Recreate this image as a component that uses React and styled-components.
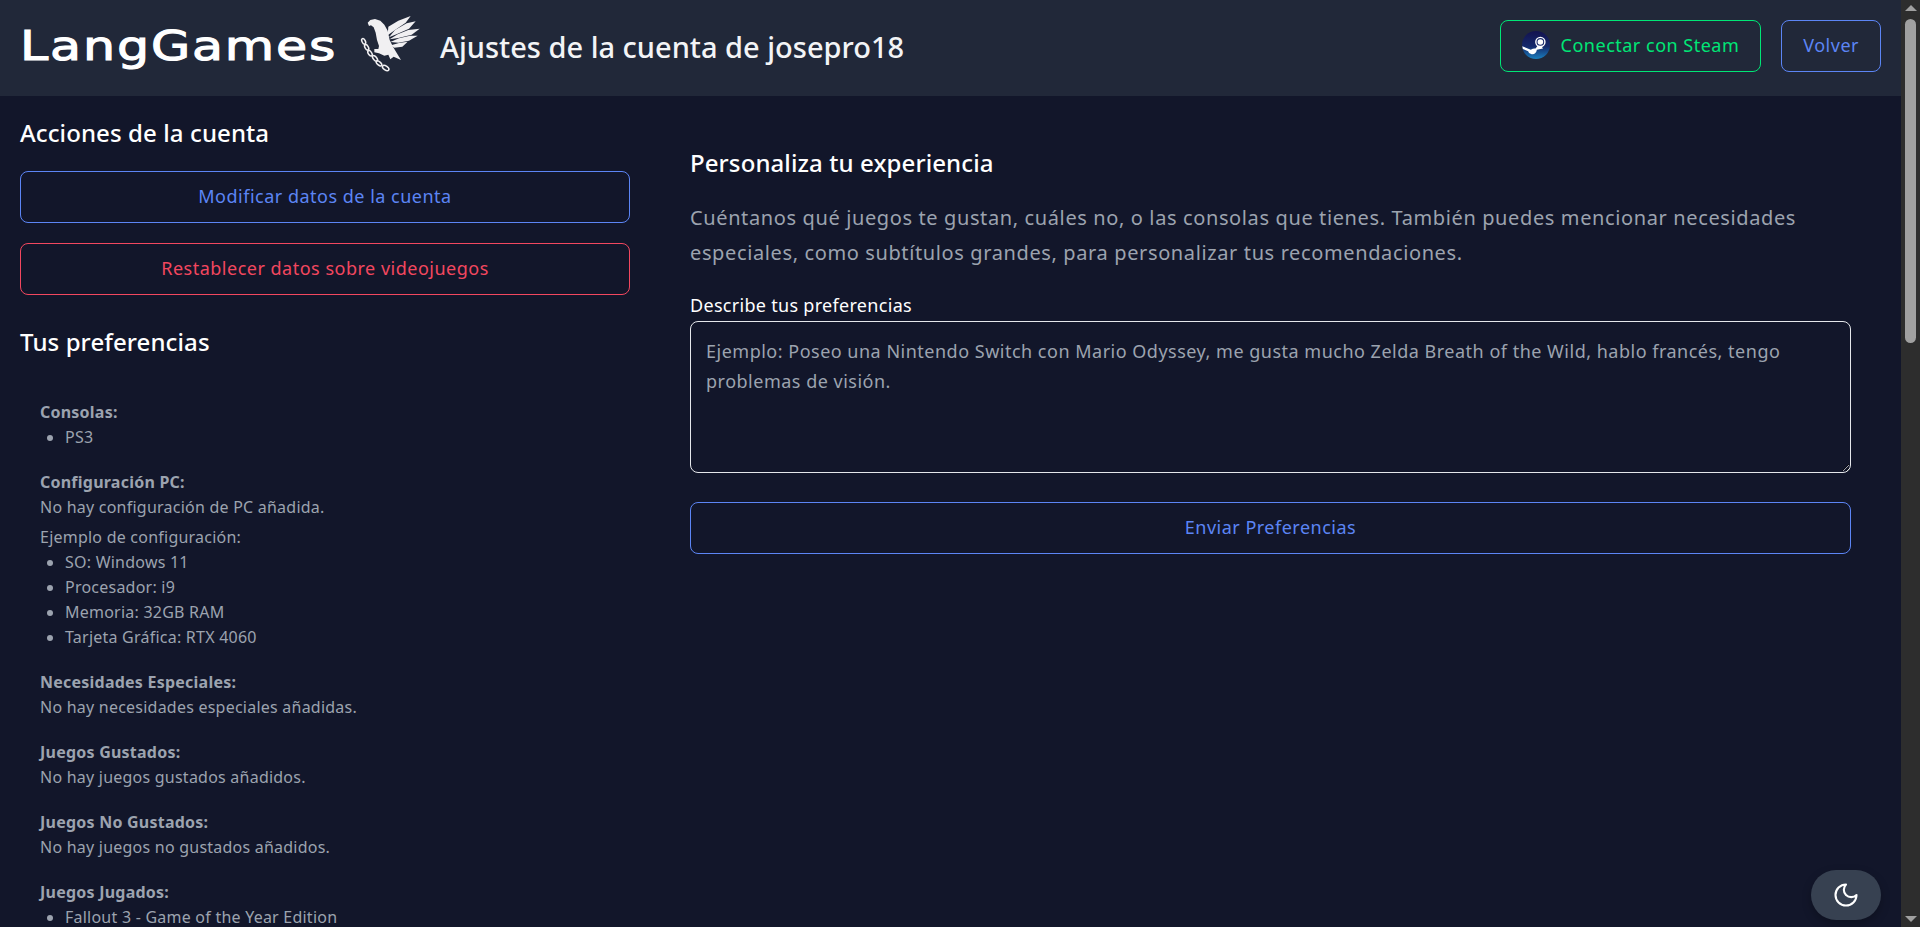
import React from 'react';
import styled, { createGlobalStyle } from 'styled-components';
import { LuMoon } from 'react-icons/lu';

const GlobalStyle = createGlobalStyle`
  html, body {
    height: 100%;
    overflow: hidden;
  }
  body {
    margin: 0;
    padding-right: 19px;
    background: #12162a;
    font-family: "Noto Sans", "Open Sans", sans-serif;
    color: #fff;
  }
  * { box-sizing: border-box; }
`;

const Header = styled.header`
  height: 96px;
  background: #212839;
  display: flex;
  align-items: center;
  padding: 0 20px 4px;
`;

const Logo = styled.span`
  display: block;
  width: 316px;
  font-family: "DejaVu Sans", sans-serif;
  font-size: 41px;
  font-weight: 400;
  letter-spacing: 1.5px;
  -webkit-text-stroke: 1.1px #fff;
  white-space: nowrap;
  transform: scaleX(1.235);
  transform-origin: left center;
`;

const Bird = styled.svg`
  width: 70px;
  height: 68px;
  margin: 0 0 4px 19px;
  flex: none;
`;

const Title = styled.h1`
  margin: 0 0 0 15px;
  font-size: 29px;
  font-weight: 500;
  color: #f3f4f6;
`;

const HeaderActions = styled.div`
  margin-left: auto;
  display: flex;
  gap: 20px;
`;

const OutlineButton = styled.button`
  height: 52px;
  display: flex;
  align-items: center;
  justify-content: center;
  gap: 11px;
  padding: 0 21px 2px;
  width: ${({ $wide }) => ($wide ? '100%' : 'auto')};
  border: 1px solid ${({ $color }) => $color};
  border-radius: 8px;
  background: transparent;
  color: ${({ $color }) => $color};
  font-family: inherit;
  font-size: 18px;
  letter-spacing: 0.5px;
`;

const Page = styled.main`
  display: grid;
  grid-template-columns: 630px 1fr;
`;

const Sidebar = styled.aside`
  padding: 20px 0 0 20px;
`;

const SideTitle = styled.h2`
  margin: 0;
  font-size: 24px;
  line-height: 34px;
  font-weight: 500;
  letter-spacing: 0.1px;
  margin-bottom: ${({ $gap }) => $gap}px;
`;

const SideActions = styled.div`
  display: flex;
  flex-direction: column;
  gap: 20px;
  margin-bottom: 30px;
`;

const PrefList = styled.div`
  padding: 41px 20px 0;
  color: #9ca3af;
  font-size: 16px;
  line-height: 25px;
  letter-spacing: 0.23px;
`;

const PrefBlock = styled.section`
  margin-bottom: 20px;
`;

const PrefName = styled.strong`
  display: block;
  font-weight: 700;
`;

const PrefNote = styled.div`
  margin-top: ${({ $gap }) => $gap || 0}px;
`;

const Bullets = styled.ul`
  margin: 0;
  padding-left: 25px;
`;

const Content = styled.section`
  padding: 50px 50px 0 60px;
`;

const ContentTitle = styled.h2`
  margin: 0 0 20px;
  font-size: 24px;
  line-height: 34px;
  font-weight: 500;
  letter-spacing: 0.1px;
`;

const Lead = styled.p`
  margin: 0 0 22px;
  font-size: 20px;
  line-height: 35px;
  letter-spacing: 0.62px;
  color: #9ca3af;
`;

const FieldLabel = styled.label`
  display: block;
  margin-bottom: 3px;
  font-size: 18px;
  line-height: 26px;
  letter-spacing: 0.3px;
`;

const TextArea = styled.textarea`
  display: block;
  width: 100%;
  height: 152px;
  margin-bottom: 29px;
  padding: 14px 15px;
  background: transparent;
  border: 1px solid #e5e7eb;
  border-radius: 8px;
  color: #fff;
  font-family: inherit;
  font-size: 18px;
  line-height: 30px;
  letter-spacing: 0.5px;
  &::placeholder {
    color: #9ca3af;
    opacity: 1;
  }
`;

const ThemeToggle = styled.button`
  position: fixed;
  right: 39px;
  bottom: 7px;
  width: 70px;
  height: 50px;
  display: flex;
  align-items: center;
  justify-content: center;
  border: 0;
  border-radius: 25px;
  background: #374151;
  color: #fff;
  box-shadow: 0 4px 10px rgba(0, 0, 0, 0.25);
`;

/* the screenshot has the browser's dark scrollbar, headless hides the real one */
const ScrollRail = styled.div`
  position: fixed;
  top: 0;
  right: 0;
  bottom: 0;
  width: 19px;
  padding: 5px 0;
  background: #2d2d2d;
  display: flex;
  flex-direction: column;
  align-items: center;
`;

const ScrollArrow = styled.span`
  flex: none;
  width: 0;
  height: 0;
  border-left: 6px solid transparent;
  border-right: 6px solid transparent;
  border-${({ $down }) => ($down ? 'top' : 'bottom')}: 6px solid #a0a0a0;
  margin-top: ${({ $down }) => ($down ? 'auto' : '0')};
`;

const ScrollThumb = styled.span`
  flex: none;
  width: 11px;
  height: 324px;
  margin-top: 8px;
  border-radius: 6px;
  background: #a0a0a0;
`;

const SteamIcon = () => (
  <svg width="28" height="28" viewBox="0 0 32 32">
    <defs>
      <linearGradient id="steamFill" x1="0" y1="0" x2="0" y2="1">
        <stop offset="0" stopColor="#13124f" />
        <stop offset="0.55" stopColor="#15296b" />
        <stop offset="1" stopColor="#1a7fbe" />
      </linearGradient>
    </defs>
    <circle cx="16" cy="16" r="16" fill="url(#steamFill)" />
    <path d="M0.3 17.5 L10 21.5 Q13 19.5 15.5 20 L20 14 L24 20 Q19 21 17 21.5 Q16 27 11 26.5 Q7.5 26 7 23 L1 20.5 Z" fill="#fff" />
    <circle cx="21" cy="12.5" r="6" fill="#fff" />
    <circle cx="21" cy="12.5" r="4.4" fill="#1a2a6c" />
    <circle cx="21" cy="12.5" r="3.2" fill="#fff" />
  </svg>
);

const BirdIcon = () => (
  <Bird viewBox="0 0 210 204" fill="#f1f0f2">
    <path d="M38 38 L46 30 L60 27 L76 32 L88 44 L98 62 L104 90 L114 110 L122 124 L138 150 L116 140 L106 148 L100 134 L88 137 L72 130 L58 127 L58 117 L70 117 L72 108 L66 90 L62 68 L56 52 L48 46 L42 48 Z" />
    <path d="M98 76 L100 50 L130 32 L167 18 L152 38 L120 60 Z" />
    <path d="M102 82 L120 60 L155 40 L182 34 L162 56 L126 72 Z" />
    <path d="M104 88 L128 73 L160 60 L194 56 L170 74 L130 84 Z" />
    <path d="M106 96 L132 85 L165 77 L188 77 L162 92 L130 98 Z" />
    <path d="M108 106 L132 99 L158 95 L142 110 L118 113 Z" />
    <g fill="none" stroke="#f1f0f2" strokeWidth="4.5">
      <ellipse cx="26" cy="94" rx="5" ry="9" transform="rotate(-25 26 94)" />
      <ellipse cx="35" cy="112" rx="5" ry="9" transform="rotate(-30 35 112)" />
      <ellipse cx="45" cy="130" rx="5" ry="9" transform="rotate(-35 45 130)" />
      <ellipse cx="60" cy="145" rx="5" ry="10" transform="rotate(-40 60 145)" />
      <ellipse cx="72" cy="160" rx="5" ry="10" transform="rotate(-50 72 160)" />
      <ellipse cx="92" cy="174" rx="6" ry="11" transform="rotate(-55 92 174)" />
    </g>
  </Bird>
);

const App = () => {
  return (
    <>
      <GlobalStyle />
      <Header>
        <Logo>LangGames</Logo>
        <BirdIcon />
        <Title>Ajustes de la cuenta de josepro18</Title>
        <HeaderActions>
          <OutlineButton $color="#00e676">
            <SteamIcon />
            Conectar con Steam
          </OutlineButton>
          <OutlineButton $color="#5c85f5">Volver</OutlineButton>
        </HeaderActions>
      </Header>
      <Page>
        <Sidebar>
          <SideTitle $gap={21}>Acciones de la cuenta</SideTitle>
          <SideActions>
            <OutlineButton $wide $color="#5c85f5">Modificar datos de la cuenta</OutlineButton>
            <OutlineButton $wide $color="#f2475f">Restablecer datos sobre videojuegos</OutlineButton>
          </SideActions>
          <SideTitle $gap={0}>Tus preferencias</SideTitle>
          <PrefList>
            <PrefBlock>
              <PrefName>Consolas:</PrefName>
              <Bullets><li>PS3</li></Bullets>
            </PrefBlock>
            <PrefBlock>
              <PrefName>Configuración PC:</PrefName>
              <PrefNote>No hay configuración de PC añadida.</PrefNote>
              <PrefNote $gap={5}>Ejemplo de configuración:</PrefNote>
              <Bullets>
                <li>SO: Windows 11</li>
                <li>Procesador: i9</li>
                <li>Memoria: 32GB RAM</li>
                <li>Tarjeta Gráfica: RTX 4060</li>
              </Bullets>
            </PrefBlock>
            <PrefBlock>
              <PrefName>Necesidades Especiales:</PrefName>
              <PrefNote>No hay necesidades especiales añadidas.</PrefNote>
            </PrefBlock>
            <PrefBlock>
              <PrefName>Juegos Gustados:</PrefName>
              <PrefNote>No hay juegos gustados añadidos.</PrefNote>
            </PrefBlock>
            <PrefBlock>
              <PrefName>Juegos No Gustados:</PrefName>
              <PrefNote>No hay juegos no gustados añadidos.</PrefNote>
            </PrefBlock>
            <PrefBlock>
              <PrefName>Juegos Jugados:</PrefName>
              <Bullets>
                <li>Fallout 3 - Game of the Year Edition</li>
              </Bullets>
            </PrefBlock>
          </PrefList>
        </Sidebar>
        <Content>
          <ContentTitle>Personaliza tu experiencia</ContentTitle>
          <Lead>
            Cuéntanos qué juegos te gustan, cuáles no, o las consolas que tienes. También puedes mencionar necesidades especiales, como subtítulos grandes, para personalizar tus recomendaciones.
          </Lead>
          <FieldLabel htmlFor="prefs">Describe tus preferencias</FieldLabel>
          <TextArea
            id="prefs"
            placeholder="Ejemplo: Poseo una Nintendo Switch con Mario Odyssey, me gusta mucho Zelda Breath of the Wild, hablo francés, tengo problemas de visión."
          />
          <OutlineButton $wide $color="#5c85f5">Enviar Preferencias</OutlineButton>
        </Content>
      </Page>
      <ThemeToggle aria-label="Cambiar tema">
        <LuMoon size={28} strokeWidth={1.8} />
      </ThemeToggle>
      <ScrollRail aria-hidden="true">
        <ScrollArrow />
        <ScrollThumb />
        <ScrollArrow $down />
      </ScrollRail>
    </>
  );
};

export default App;
